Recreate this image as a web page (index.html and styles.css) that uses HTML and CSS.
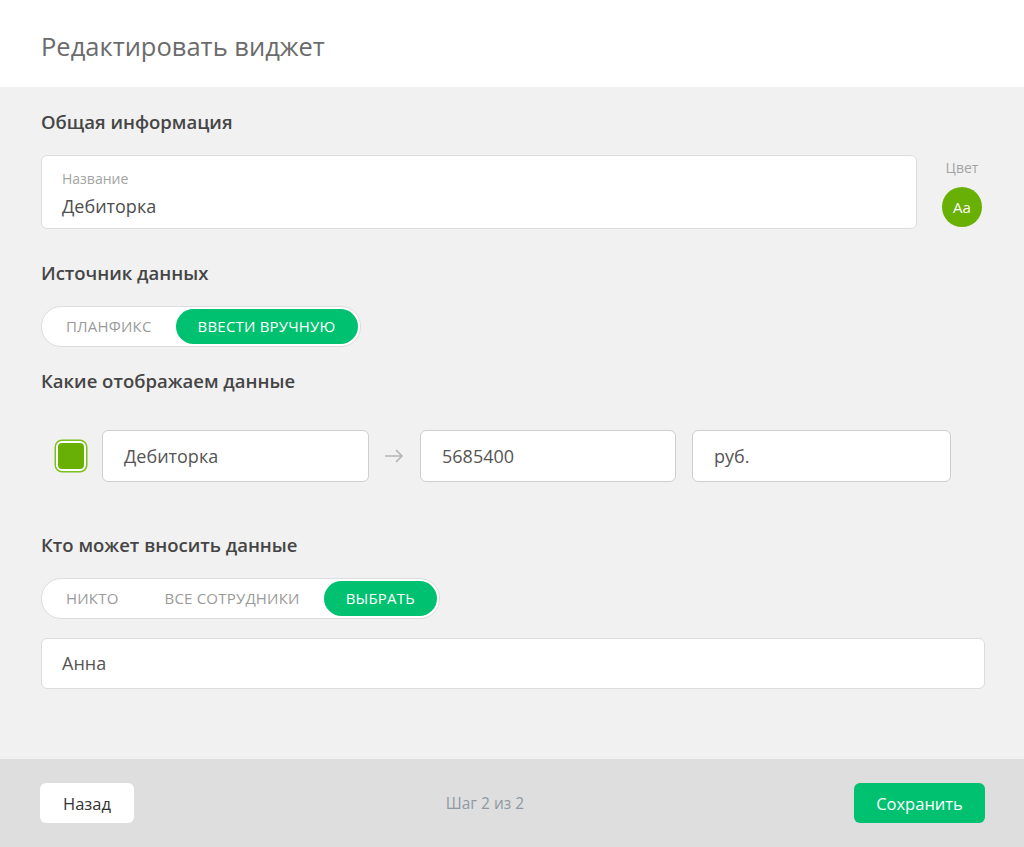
FILE: index.html
```html
<!DOCTYPE html>
<html lang="ru">
<head>
    <meta charset="UTF-8">
    <meta name="viewport" content="width=device-width, initial-scale=1.0">
    <title>Редактировать виджет</title>
    <link rel="stylesheet" href="styles.css">
</head>
<body>
    <div class="modal">
        <div class="modal-header">Редактировать виджет</div>

        <div class="modal-body">
            <div class="section-title">Общая информация</div>
            <div class="name-row">
                <div class="field-card">
                    <div class="field-label">Название</div>
                    <div class="field-value">Дебиторка</div>
                </div>
                <div class="color-pick">
                    <div class="color-label">Цвет</div>
                    <div class="color-circle">Aa</div>
                </div>
            </div>

            <div class="section-title">Источник данных</div>
            <div class="switch">
                <span class="switch-item">Планфикс</span>
                <span class="switch-item active">Ввести вручную</span>
            </div>

            <div class="section-title">Какие отображаем данные</div>
            <div class="data-row">
                <span class="checkbox"></span>
                <div class="data-input wide">Дебиторка</div>
                <svg class="arrow" width="20" height="14" viewBox="0 0 20 14">
                    <path d="M1 7h17M12 1l6 6-6 6" fill="none" stroke="#b5b5b5" stroke-width="1.6"/>
                </svg>
                <div class="data-input">5685400</div>
                <div class="data-input last">руб.</div>
            </div>

            <div class="section-title">Кто может вносить данные</div>
            <div class="switch">
                <span class="switch-item">Никто</span>
                <span class="switch-item">Все сотрудники</span>
                <span class="switch-item active">Выбрать</span>
            </div>
            <div class="people-input">Анна</div>
        </div>

        <div class="modal-footer">
            <button class="btn btn-back">Назад</button>
            <span class="step">Шаг 2 из 2</span>
            <button class="btn btn-save">Сохранить</button>
        </div>
    </div>
</body>
</html>
```

FILE: styles.css
```css
body {
    margin: 0;
    font-family: 'Open Sans', 'Noto Sans', sans-serif;
    color: #444;
    background-color: #f1f1f1;
}

.modal {
    width: 1024px;
    height: 847px;
    display: flex;
    flex-direction: column;
}

.modal-header {
    height: 87px;
    box-sizing: border-box;
    padding: 28px 41px 0;
    background-color: #fff;
    font-size: 25.5px;
    color: #6b6b6b;
    line-height: 36px;
}

.modal-body {
    flex: 1;
    padding: 22px 39px 0 41px;
    background-color: #f1f1f1;
}

.section-title {
    font-size: 18.5px;
    font-weight: 600;
    color: #454545;
    line-height: 26px;
    margin-bottom: 20px;
}

.name-row {
    display: flex;
    align-items: flex-start;
    margin-bottom: 31px;
}

.field-card {
    width: 876px;
    height: 74px;
    box-sizing: border-box;
    padding: 13px 20px 0;
    background-color: #fff;
    border: 1px solid #dcdcdc;
    border-radius: 6px;
}

.field-label {
    font-size: 14px;
    color: #a3a3a3;
    line-height: 20px;
}

.field-value {
    font-size: 18px;
    color: #4d4d4d;
    line-height: 30px;
    margin-top: 2px;
}

.color-pick {
    margin-left: 25px;
    display: flex;
    flex-direction: column;
    align-items: center;
}

.color-label {
    font-size: 14px;
    color: #a3a3a3;
    line-height: 20px;
    margin-top: 3px;
}

.color-circle {
    width: 40px;
    height: 40px;
    margin-top: 9px;
    border-radius: 50%;
    background-color: #69b004;
    color: #fff;
    font-size: 15px;
    display: flex;
    align-items: center;
    justify-content: center;
}

.switch {
    display: inline-flex;
    align-items: center;
    gap: 2px;
    padding: 2px;
    background-color: #fff;
    border: 1px solid #dcdcdc;
    border-radius: 20px;
    margin-bottom: 21px;
}

.switch-item {
    padding: 0 22px;
    height: 35px;
    line-height: 35px;
    font-size: 15px;
    letter-spacing: 0.2px;
    text-transform: uppercase;
    color: #9a9a9a;
    border-radius: 18px;
}

.switch-item.active {
    background-color: #00c16f;
    color: #fff;
}

.data-row {
    display: flex;
    align-items: center;
    margin-top: 36px;
    margin-bottom: 50px;
}

.checkbox {
    width: 26px;
    height: 26px;
    margin-left: 15px;
    margin-right: 16px;
    background-color: #69b004;
    border: 2px solid #fff;
    border-radius: 6px;
    box-shadow: 0 0 0 1.5px #7bbf1b;
}

.data-input {
    width: 256px;
    height: 52px;
    box-sizing: border-box;
    padding: 0 21px;
    background-color: #fff;
    border: 1px solid #cfcfcf;
    border-radius: 6px;
    font-size: 18px;
    line-height: 50px;
    color: #555;
    margin-right: 16px;
}

.data-input.wide {
    width: 267px;
    margin-right: 15px;
}

.data-input.last {
    width: 259px;
}

.arrow {
    margin-right: 16px;
}

.switch + .people-input {
    margin-top: -2px;
}

.people-input {
    height: 51px;
    box-sizing: border-box;
    padding: 0 20px;
    background-color: #fff;
    border: 1px solid #dcdcdc;
    border-radius: 6px;
    font-size: 18px;
    line-height: 49px;
    color: #555;
}

.modal-footer {
    height: 88px;
    box-sizing: border-box;
    padding: 0 39px 0 40px;
    background-color: #dedede;
    display: flex;
    align-items: center;
    justify-content: space-between;
}

.btn {
    height: 40px;
    border: none;
    border-radius: 6px;
    font-family: inherit;
    font-size: 16.5px;
    cursor: pointer;
}

.btn-back {
    width: 94px;
    background-color: #fff;
    color: #333;
}

.btn-save {
    width: 131px;
    background-color: #00c16f;
    color: #fff;
}

.step {
    font-size: 15.5px;
    color: #8f99a3;
    margin-right: 18px;
}
```
